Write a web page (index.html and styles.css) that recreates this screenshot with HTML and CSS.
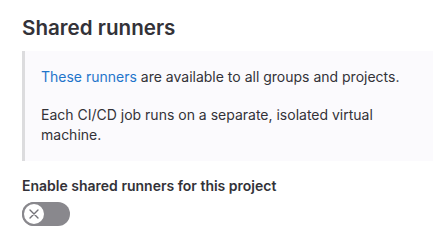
FILE: index.html
```html
<!DOCTYPE html>
<html lang="en">
  <head>
    <meta charset="UTF-8" />
    <meta name="viewport" content="width=device-width, initial-scale=1.0" />
    <title>Shared runners</title>
    <link rel="stylesheet" href="styles.css">
  </head>
  <body>
    <section class="runners">
      <h4 class="title">Shared runners</h4>
      <blockquote class="note">
        <p><a href="#">These runners</a> are available to all groups and projects.</p>
        <p>Each CI/CD job runs on a separate, isolated virtual machine.</p>
      </blockquote>
      <div class="field">
        <label class="label">Enable shared runners for this project</label>
        <button class="toggle" type="button">
          <span class="knob">
            <svg width="12" height="12" viewBox="0 0 12 12">
              <path d="M2 2 L10 10 M10 2 L2 10" stroke="#737278" stroke-width="1.4" stroke-linecap="round" fill="none" />
            </svg>
          </span>
        </button>
      </div>
    </section>
  </body>
</html>
```

FILE: styles.css
```css
* {
  padding: 0;
  margin: 0;
  box-sizing: border-box;
}
body {
  font-family: Inter, "Noto Sans", sans-serif;
  font-size: 14px;
  line-height: 20px;
  color: #333238;
  background: #fff;
}
.runners {
  padding: 12px 5px 0 22px;
}
.title {
  font-size: 20.6px;
  line-height: 32px;
  font-weight: 600;
  color: #333238;
  margin-bottom: 7px;
}
.note {
  background-color: #fbfafd;
  border-left: 3px solid #dcdcde;
  padding: 16px;
}
.note p {
  margin-bottom: 18px;
}
.note p:last-child {
  margin-bottom: 0;
}
.note a {
  color: #1f75cb;
  text-decoration: none;
}
.field {
  margin-top: 15px;
}
.label {
  display: block;
  font-weight: 600;
  margin-bottom: 6px;
}
.toggle {
  display: flex;
  align-items: center;
  width: 48px;
  height: 24px;
  border: none;
  border-radius: 12px;
  background-color: #89888d;
  padding: 0;
}
.knob {
  display: flex;
  align-items: center;
  justify-content: center;
  width: 24px;
  height: 24px;
  border-radius: 50%;
  background: #fff;
  border: 2px solid #89888d;
}
```
